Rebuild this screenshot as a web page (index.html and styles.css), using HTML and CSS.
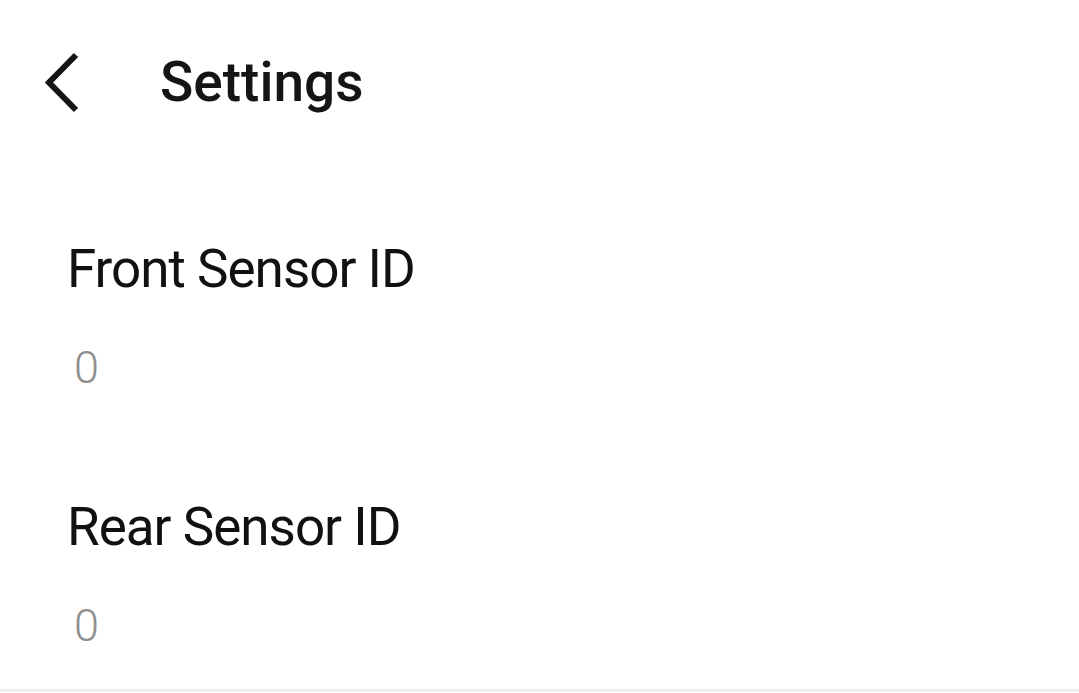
FILE: index.html
```html
<!DOCTYPE html>
<html lang="en">

<head>
  <meta charset="UTF-8">
  <meta name="viewport" content="width=device-width, initial-scale=1.0">
  <title>Settings</title>
  <link rel="stylesheet" href="styles.css">
</head>

<body>
  <div class="page">
    <div class="header">
      <div class="back">
        <svg width="40" height="62" viewBox="0 0 40 62">
          <polyline points="32,4 5,31.5 32,59" fill="none" stroke="#151515" stroke-width="6" />
        </svg>
      </div>
      <div class="title">Settings</div>
    </div>
    <div class="list">
      <div class="item">
        <div class="label">Front Sensor ID</div>
        <div class="value">0</div>
      </div>
      <div class="item">
        <div class="label">Rear Sensor ID</div>
        <div class="value">0</div>
      </div>
    </div>
  </div>
</body>

</html>
```

FILE: styles.css
```css
html,
body {
  margin: 0;
  padding: 0;
  background: #fff;
}

body {
  font-family: Roboto, "Noto Sans", sans-serif;
  height: 693px;
  overflow: hidden;
}

.page {
  width: 100%;
}

.header {
  height: 164px;
  display: flex;
  align-items: center;
  box-sizing: border-box;
  padding-left: 44px;
}

.back {
  width: 40px;
  height: 62px;
  margin-right: 76px;
}

.back svg {
  display: block;
}

.title {
  font-size: 55px;
  line-height: 66px;
  font-weight: 500;
  color: #151515;
}

.list {
  padding: 72px 0 38px 67px;
  display: flex;
  flex-direction: column;
  gap: 101px;
  border-bottom: 3px solid #eeeeee;
}

.label {
  font-size: 53px;
  line-height: 66px;
  letter-spacing: -1px;
  color: #111;
}

.value {
  margin-top: 41px;
  padding-left: 7px;
  font-size: 45px;
  line-height: 50px;
  font-weight: 300;
  color: #8f8f8f;
}
```
